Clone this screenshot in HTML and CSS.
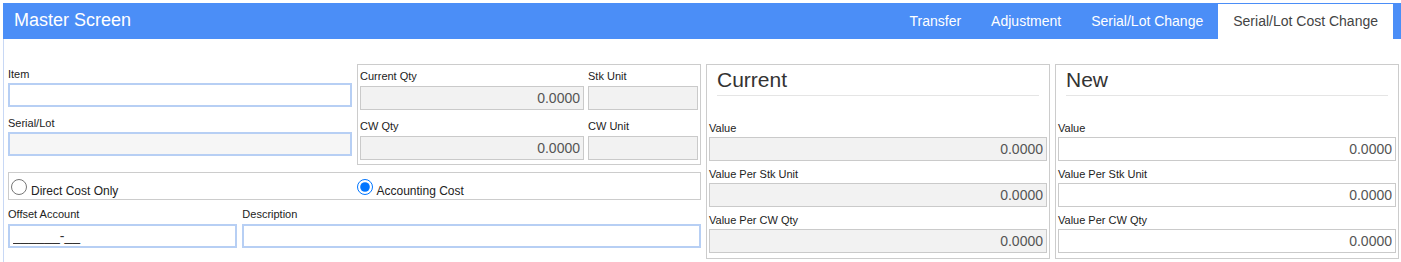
FILE: index.html
```html
<!DOCTYPE html>
<html lang="en">
<head>
  <meta charset="UTF-8">
  <meta name="viewport" content="width=device-width, initial-scale=1.0">
  <title>Master Screen</title>
  <link rel="stylesheet" href="styles.css">
</head>
<body>

  <div class="screen">
    <!-- Header -->
    <div class="header">
      <div class="title">Master Screen</div>
      <div class="tabs">
        <button class="tab">Transfer</button>
        <button class="tab">Adjustment</button>
        <button class="tab">Serial/Lot Change</button>
        <button class="tab active">Serial/Lot Cost Change</button>
      </div>
    </div>

    <!-- Content -->
    <div class="content">
      <div class="main-grid">

        <div class="left-area">
          <div class="item-col">
            <div class="field">
              <label>Item</label>
              <input type="text" class="input focus">
            </div>
            <div class="field">
              <label>Serial/Lot</label>
              <input type="text" class="input focus shaded">
            </div>
          </div>

          <div class="qty-box">
            <div class="qty-row">
              <div class="field">
                <label>Current Qty</label>
                <input type="text" class="input grey num" value="0.0000" readonly>
              </div>
              <div class="field">
                <label>Stk Unit</label>
                <input type="text" class="input grey" readonly>
              </div>
            </div>
            <div class="qty-row">
              <div class="field">
                <label>CW Qty</label>
                <input type="text" class="input grey num" value="0.0000" readonly>
              </div>
              <div class="field">
                <label>CW Unit</label>
                <input type="text" class="input grey" readonly>
              </div>
            </div>
          </div>

          <div class="cost-type">
            <label class="radio-opt"><input type="radio" name="cost">Direct Cost Only</label>
            <label class="radio-opt"><input type="radio" name="cost" checked>Accounting Cost</label>
          </div>

          <div class="offset-row">
            <div class="field">
              <label>Offset Account</label>
              <input type="text" class="input focus" value="______-__">
            </div>
            <div class="field">
              <label>Description</label>
              <input type="text" class="input focus">
            </div>
          </div>
        </div>

        <div class="panel">
          <h2 class="panel-title">Current</h2>
          <div class="field">
            <label>Value</label>
            <input type="text" class="input grey num" value="0.0000" readonly>
          </div>
          <div class="field">
            <label>Value Per Stk Unit</label>
            <input type="text" class="input grey num" value="0.0000" readonly>
          </div>
          <div class="field">
            <label>Value Per CW Qty</label>
            <input type="text" class="input grey num" value="0.0000" readonly>
          </div>
        </div>

        <div class="panel">
          <h2 class="panel-title">New</h2>
          <div class="field">
            <label>Value</label>
            <input type="text" class="input num" value="0.0000">
          </div>
          <div class="field">
            <label>Value Per Stk Unit</label>
            <input type="text" class="input num" value="0.0000">
          </div>
          <div class="field">
            <label>Value Per CW Qty</label>
            <input type="text" class="input num" value="0.0000">
          </div>
        </div>

      </div>
    </div>
  </div>

</body>
</html>
```

FILE: styles.css
```css
body {
  margin: 0;
  font-family: 'Liberation Sans', Arial, sans-serif;
  background-color: #fff;
  color: #222;
  overflow: hidden;
}

.screen {
  margin: 3px 0 0 3px;
}

/* Header */
.header {
  display: flex;
  justify-content: space-between;
  align-items: stretch;
  height: 36px;
  background-color: #4b8ef7;
}

.title {
  padding-left: 11px;
  font-size: 18px;
  line-height: 35px;
  color: #fff;
}

.tabs {
  display: flex;
  margin-right: 8px;
  padding-top: 1px;
}

.tab {
  background-color: transparent;
  border: none;
  color: #fff;
  padding: 0 15px 2px 15px;
  font-family: inherit;
  font-size: 14px;
  cursor: pointer;
  outline: none;
}

.tab.active {
  background-color: #fff;
  color: #444;
}

/* Content */
.content {
  border-left: 1px solid #c8d8f5;
  padding: 25px 2px 0 4px;
  height: 198px;
}

.main-grid {
  display: grid;
  grid-template-columns: repeat(4, 1fr);
  column-gap: 5px;
  align-items: start;
}

.left-area {
  grid-column: span 2;
  display: grid;
  grid-template-columns: 1fr 1fr;
  column-gap: 5px;
  align-items: start;
}

label {
  display: block;
  font-size: 11px;
  line-height: 13px;
  margin-bottom: 2px;
  color: #222;
}

.input {
  display: block;
  width: 100%;
  height: 24px;
  box-sizing: border-box;
  margin: 0;
  padding: 0 3px;
  font-family: inherit;
  font-size: 14px;
  color: #333;
  background-color: #fff;
  border: 1px solid #cacaca;
  outline: none;
}

.input.focus {
  border: 2px solid #b7cff4;
}

.input.shaded {
  background-color: #f6f6f6;
}

.input.grey {
  background-color: #f2f2f2;
}

.input.num {
  text-align: right;
  color: #555;
}

/* Item column */
.item-col {
  padding-top: 4px;
}

.item-col .field + .field {
  margin-top: 10px;
}

/* Qty box */
.qty-box {
  border: 1px solid #cccccc;
  padding: 5px 2px 4px 2px;
}

.qty-box label {
  margin-bottom: 3px;
}

.qty-row {
  display: grid;
  grid-template-columns: 1fr 110px;
  column-gap: 4px;
}

.qty-row + .qty-row {
  margin-top: 10px;
}

/* Cost type radios */
.cost-type {
  grid-column: span 2;
  display: grid;
  grid-template-columns: 1fr 1fr;
  margin-top: 7px;
  height: 28px;
  box-sizing: border-box;
  padding-top: 6px;
  border: 1px solid #cccccc;
}

.radio-opt {
  display: block;
  margin: 0;
  padding-left: 2px;
  font-size: 12px;
  line-height: 16px;
  color: #222;
}

.radio-opt input {
  width: 16px;
  height: 16px;
  margin: 0 4px -1px 0;
  vertical-align: baseline;
}

/* Offset row */
.offset-row {
  grid-column: span 2;
  display: grid;
  grid-template-columns: 1fr 2fr;
  column-gap: 5px;
  margin-top: 8px;
}

.offset-row label {
  margin-bottom: 3px;
}

/* Current / New panels */
.panel {
  border: 1px solid #cccccc;
  padding: 0 2px 5px 2px;
}

.panel-title {
  margin: 0 8px 26px 8px;
  padding: 3px 0 3px 0;
  font-size: 21px;
  line-height: 24px;
  font-weight: normal;
  color: #333;
  border-bottom: 1px solid #e5e5e5;
}

.panel .field + .field {
  margin-top: 7px;
}
```
